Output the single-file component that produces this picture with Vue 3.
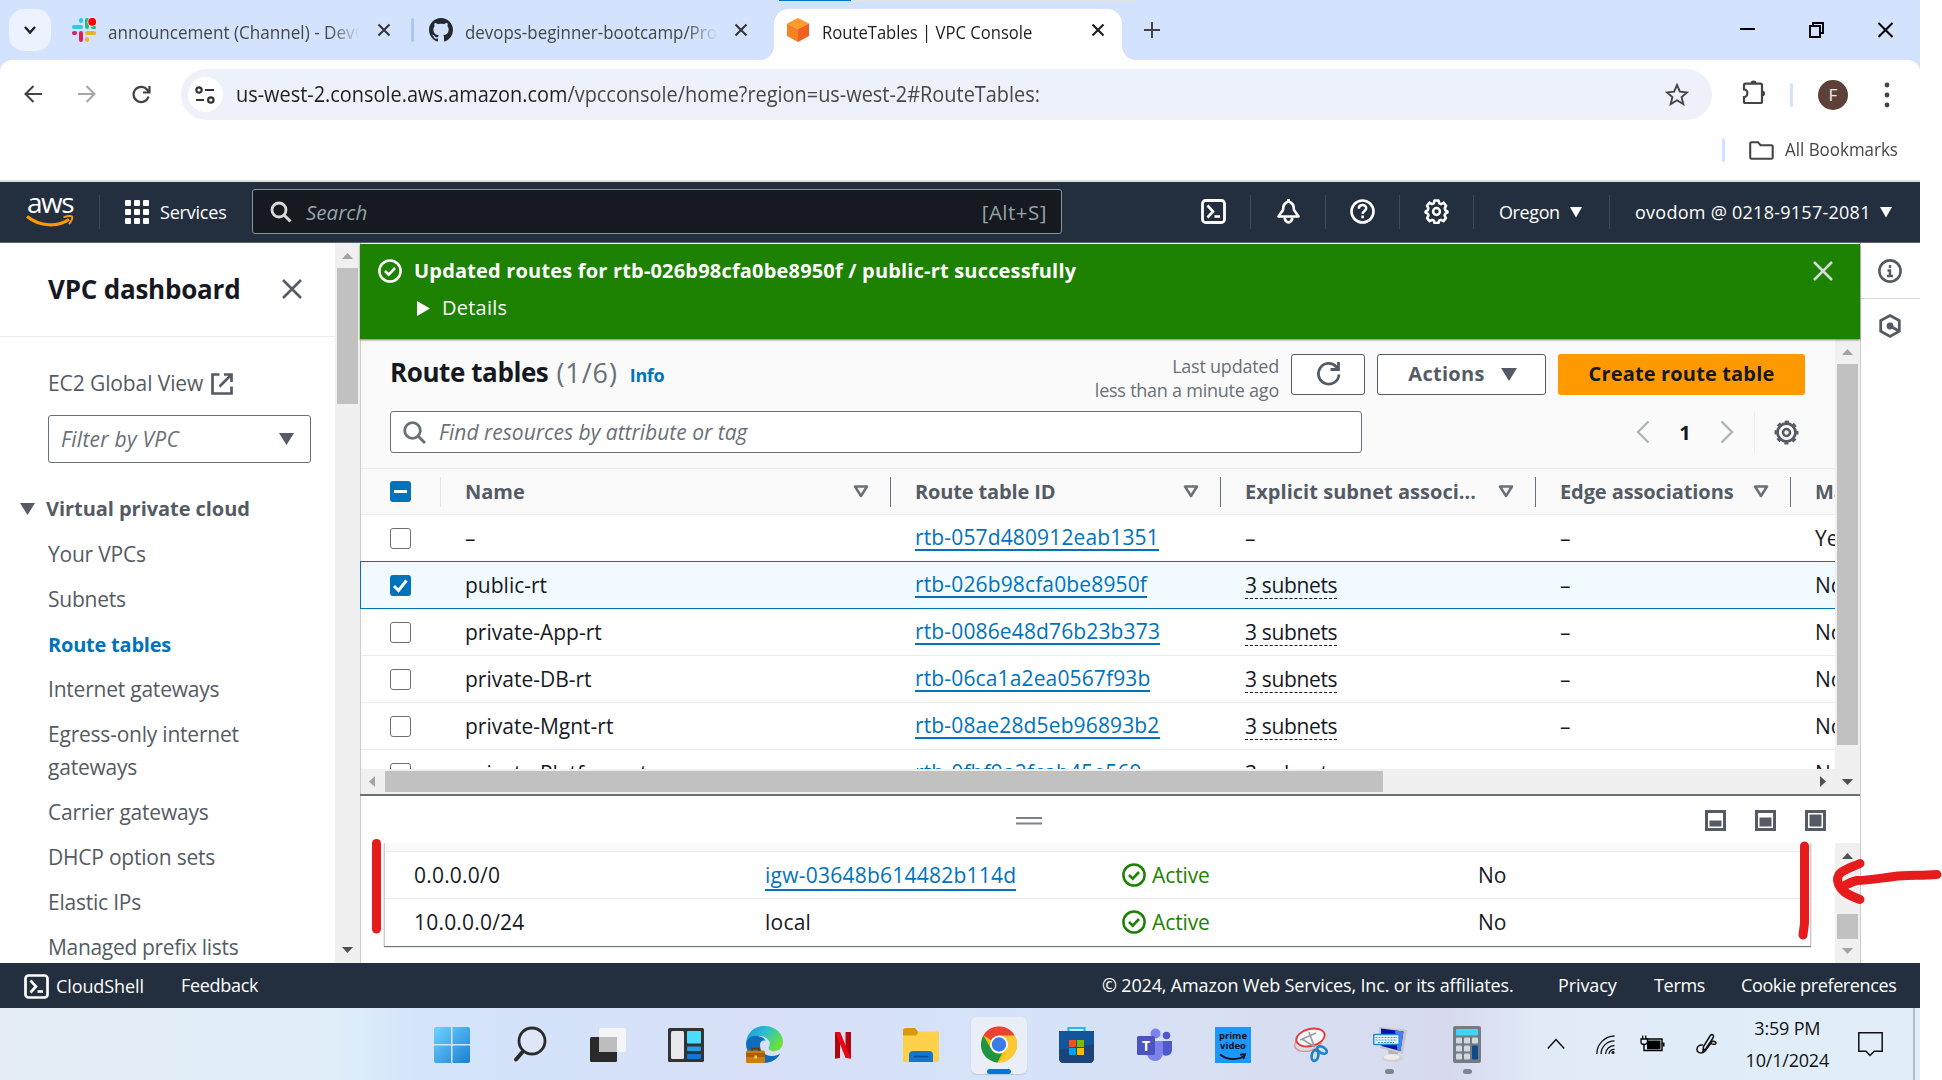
<script setup>
const navItems = [
  { label: 'Your VPCs' },
  { label: 'Subnets' },
  { label: 'Route tables', active: true },
  { label: 'Internet gateways' },
  { label: 'Egress-only internet gateways' },
  { label: 'Carrier gateways' },
  { label: 'DHCP option sets' },
  { label: 'Elastic IPs' },
  { label: 'Managed prefix lists' },
]

const routeTables = [
  { name: '–', id: 'rtb-057d480912eab1351', subnets: '–', edge: '–', main: 'Yes' },
  { name: 'public-rt', id: 'rtb-026b98cfa0be8950f', subnets: '3 subnets', edge: '–', main: 'No', selected: true },
  { name: 'private-App-rt', id: 'rtb-0086e48d76b23b373', subnets: '3 subnets', edge: '–', main: 'No' },
  { name: 'private-DB-rt', id: 'rtb-06ca1a2ea0567f93b', subnets: '3 subnets', edge: '–', main: 'No' },
  { name: 'private-Mgnt-rt', id: 'rtb-08ae28d5eb96893b2', subnets: '3 subnets', edge: '–', main: 'No' },
  { name: 'private-Platform-rt', id: 'rtb-0fbf9a2fcab45e569', subnets: '3 subnets', edge: '', main: 'No' },
]

const routes = [
  { destination: '0.0.0.0/0', target: 'igw-03648b614482b114d', link: true, status: 'Active', propagated: 'No' },
  { destination: '10.0.0.0/24', target: 'local', link: false, status: 'Active', propagated: 'No' },
]
</script>

<template>
  <div class="screen">
    <!-- Browser tab strip -->
    <div class="tabstrip">
      <div class="progress"><i></i></div>
      <div class="tabsearch">
        <svg width="14" height="12" viewBox="0 0 14 12"><path d="M2 3l5 5.5L12 3" fill="none" stroke="#1f1f1f" stroke-width="2.4" /></svg>
      </div>
      <div class="tab tab-slack">
        <svg class="fav" width="24" height="24" viewBox="0 0 24 24">
          <rect x="7" y="0" width="4" height="5" rx="2" fill="#36c5f0" /><rect x="0" y="7" width="11" height="4" rx="2" fill="#36c5f0" />
          <rect x="13" y="0" width="4" height="11" rx="2" fill="#2eb67d" /><rect x="19" y="8" width="5" height="3" rx="1.5" fill="#2eb67d" />
          <rect x="13" y="13" width="11" height="4" rx="2" fill="#ecb22e" /><rect x="13" y="19" width="4" height="5" rx="2" fill="#ecb22e" />
          <rect x="0" y="13" width="5" height="4" rx="2" fill="#e01e5a" /><rect x="7" y="13" width="4" height="11" rx="2" fill="#e01e5a" />
          <circle cx="20" cy="4" r="4.6" fill="#d3e3fd" /><circle cx="20.2" cy="3.8" r="3.9" fill="#f00" />
        </svg>
        <span class="tabtitle fade"><span>announcement (Channel) - DevO</span></span>
        <svg class="tabx" width="14" height="14" viewBox="0 0 14 14"><path d="M1.5 1.5l11 11M12.500 1.500l-11 11" stroke="#333" stroke-width="2" /></svg>
      </div>
      <i class="tabsep"></i>
      <div class="tab tab-github">
        <svg class="fav" width="24" height="24" viewBox="0 0 16 16"><path fill="#24292f" d="M8 0C3.58 0 0 3.58 0 8c0 3.54 2.29 6.53 5.47 7.59.4.07.55-.17.55-.38 0-.19-.01-.82-.01-1.49-2.01.37-2.53-.49-2.69-.94-.09-.23-.48-.94-.82-1.13-.28-.15-.68-.52-.01-.53.63-.01 1.08.58 1.23.82.72 1.21 1.87.87 2.33.66.07-.52.28-.87.51-1.07-1.78-.2-3.64-.89-3.64-3.95 0-.87.31-1.59.82-2.15-.08-.2-.36-1.02.08-2.12 0 0 .67-.21 2.2.82.64-.18 1.32-.27 2-.27s1.36.09 2 .27c1.53-1.04 2.2-.82 2.2-.82.44 1.1.16 1.92.08 2.12.51.56.82 1.27.82 2.15 0 3.07-1.87 3.75-3.65 3.95.29.25.54.73.54 1.48 0 1.07-.01 1.93-.01 2.2 0 .21.15.46.55.38A8.01 8.01 0 0 0 16 8c0-4.42-3.58-8-8-8z" /></svg>
        <span class="tabtitle fade"><span>devops-beginner-bootcamp/Pro</span></span>
        <svg class="tabx" width="14" height="14" viewBox="0 0 14 14"><path d="M1.5 1.5l11 11M12.500 1.500l-11 11" stroke="#333" stroke-width="2" /></svg>
      </div>
      <div class="tab tab-active">
        <svg class="fav" width="22" height="24" viewBox="0 0 22 24"><path d="M11 0l11 5.500L11 11 0 5.500z" fill="#ff9a2c" /><path d="M0 5.500L11 11v13L0 18z" fill="#f58220" /><path d="M22 5.500L11 11v13l11-6z" fill="#ee5f20" /></svg>
        <span class="tabtitle"><span>RouteTables | VPC Console</span></span>
        <svg class="tabx" width="14" height="14" viewBox="0 0 14 14"><path d="M1.500 1.500l11 11M12.500 1.500l-11 11" stroke="#222" stroke-width="2.200" /></svg>
      </div>
      <svg class="newtab" width="16" height="16" viewBox="0 0 16 16"><path d="M8 0v16M0 8h16" stroke="#444" stroke-width="2" /></svg>
      <div class="winbtns">
        <svg width="15" height="16" viewBox="0 0 15 16"><path d="M0 7h15" stroke="#000" stroke-width="2" /></svg>
        <svg width="15" height="16" viewBox="0 0 15 16"><path d="M1 4h10v11H1zM4 4V1h10v10h-3" fill="none" stroke="#000" stroke-width="1.900" /></svg>
        <svg width="15" height="16" viewBox="0 0 15 16"><path d="M.5 1l14 14M14.500 1l-14 14" stroke="#000" stroke-width="2" /></svg>
      </div>
    </div>

    <!-- Browser toolbar -->
    <div class="toolwrap">
      <div class="toolbar">
        <div class="nav-btns">
          <svg width="18" height="18" viewBox="0 0 18 18"><path d="M18 9H2M9.500 1L1.500 9l8 8" fill="none" stroke="#444" stroke-width="2.100" /></svg>
          <svg width="18" height="18" viewBox="0 0 18 18"><path d="M0 9h16M8.500 1l8 8-8 8" fill="none" stroke="#a6a6a6" stroke-width="2.100" /></svg>
          <svg width="19" height="19" viewBox="0 0 19 19"><path d="M16.500 11.500A7.600 7.600 0 1 1 15 4.500L17 7M17.500 1v6.500H11" fill="none" stroke="#444" stroke-width="2.200" /></svg>
        </div>
        <div class="urlbar">
          <span class="siteinfo">
            <svg width="20" height="18" viewBox="0 0 20 18"><g fill="none" stroke="#333" stroke-width="2.200"><circle cx="4" cy="4" r="2.700" /><path d="M10 4h9M1 14h8" /><circle cx="15.800" cy="14" r="2.700" /></g></svg>
          </span>
          <span class="url"><b>us-west-2.console.aws.amazon.com</b>/vpcconsole/home?region=us-west-2#RouteTables:</span>
          <svg width="24" height="23" viewBox="0 0 24 23"><path d="M12 2l2.900 6.700 7.100.7-5.400 4.700 1.700 7L12 17.300 5.700 21.100l1.700-7L2 9.400l7.100-.7z" fill="none" stroke="#444" stroke-width="1.900" /></svg>
        </div>
        <svg class="puzzle" width="24" height="25" viewBox="0 0 24 25"><path d="M2 5.200c0-1 .5-1.500 1.500-1.500H18.500c1 0 1.500.5 1.500 1.500V21.500c0 1-.5 1.500-1.500 1.500H3.500C2.500 23 2 22.500 2 21.500V17c4.500 0 4.500-7.500 0-7.500z" fill="none" stroke="#444" stroke-width="2.200" /><path d="M8.500 3.500a3 3 0 0 1 6 0zM20 10.500a2.800 2.800 0 0 1 0 6z" fill="#444" /></svg>
        <i class="vsep"></i>
        <span class="avatar">F</span>
        <svg class="dots" width="6" height="26" viewBox="0 0 6 26"><g fill="#444"><circle cx="3" cy="3" r="2.400" /><circle cx="3" cy="13" r="2.400" /><circle cx="3" cy="23" r="2.400" /></g></svg>
      </div>
      <div class="bookmarks">
        <i class="vsep"></i>
        <svg width="25" height="19" viewBox="0 0 25 19"><path d="M1.200 2.500c0-.8.500-1.300 1.300-1.300H9l2.500 3h10.800c.9 0 1.400.5 1.400 1.300V16.500c0 .8-.5 1.300-1.400 1.300H2.500c-.8 0-1.300-.5-1.300-1.300z" fill="none" stroke="#444" stroke-width="2.100" /></svg>
        <span>All Bookmarks</span>
      </div>
    </div>

    <!-- AWS header -->
    <header class="awsbar">
      <div class="awslogo">
        <span>aws</span>
        <svg width="48" height="14" viewBox="0 0 48 14"><path d="M1 1.500C14 12 32 12 43 4.500" fill="none" stroke="#ff9900" stroke-width="3.200" /><path d="M37.500 2.500C41 .8 45 .6 46 1.500c.8 1.500-.5 5-3 7.500" fill="none" stroke="#ff9900" stroke-width="1.900" /></svg>
      </div>
      <i class="hsep s1"></i>
      <svg class="grid" width="24" height="24" viewBox="0 0 24 24"><g fill="#fff"><template v-for="r in 3" :key="r"><rect v-for="c in 3" :key="c" :x="(c - 1) * 9" :y="(r - 1) * 9" width="6" height="6" rx="1" /></template></g></svg>
      <span class="services">Services</span>
      <div class="awssearch">
        <svg width="22" height="22" viewBox="0 0 22 22"><circle cx="9" cy="9" r="7" fill="none" stroke="#d5dbdb" stroke-width="2.800" /><path d="M14 14l6.500 6.500" stroke="#d5dbdb" stroke-width="3" /></svg>
        <em>Search</em><span>[Alt+S]</span>
      </div>
      <svg class="ic-shell" width="25" height="25" viewBox="0 0 25 25"><rect x="1.500" y="1.500" width="22" height="22" rx="3" fill="none" stroke="#fff" stroke-width="2.800" /><path d="M6.500 6.500l5.500 6-5.500 6" fill="none" stroke="#fff" stroke-width="2.600" /><path d="M13.500 17.500h5.500" stroke="#fff" stroke-width="2.600" /></svg>
      <i class="hsep s2"></i>
      <svg class="ic-bell" width="25" height="25" viewBox="0 0 25 25"><path d="M12.500 2.500c-4 1-5.500 4-5.500 8.500L2.500 17.500h20L18 11c0-4.500-1.500-7.500-5.500-8.500z" fill="none" stroke="#fff" stroke-width="2.600" stroke-linejoin="round" /><path d="M8.800 18.500c0 6.500 7.400 6.500 7.400 0M12.500 0v3" fill="none" stroke="#fff" stroke-width="2.800" /></svg>
      <i class="hsep s3"></i>
      <svg class="ic-help" width="25" height="25" viewBox="0 0 25 25"><circle cx="12.500" cy="12.500" r="11" fill="none" stroke="#fff" stroke-width="2.600" /><path d="M8.800 9.800c0-5 7.400-4.800 7.400-.6 0 2.800-3.600 2.800-3.600 5.800M12.600 16.500v2.800" fill="none" stroke="#fff" stroke-width="2.500" /></svg>
      <i class="hsep s3"></i>
      <svg class="ic-gear" width="25" height="25" viewBox="0 0 25 25"><path d="M10.500 1.500h4l.8 2.800 1.800.8 2.600-1.400 2.400 3-1.300 2.400.5 2 2.200 1.400-.1 1-2.300 1.400-.5 1.800 1.300 2.500-2.500 3-2.500-1.300-1.800.7-.7 2.500h-3.800l-.7-2.500-1.800-.7-2.500 1.300-2.500-3 1.300-2.500-.5-1.800-2.300-1.400v-1l2.200-1.400.5-2-1.300-2.400 2.400-3 2.600 1.400 1.800-.8z" fill="none" stroke="#fff" stroke-width="2.600" stroke-linejoin="round" /><circle cx="12.500" cy="12.500" r="3.400" fill="none" stroke="#fff" stroke-width="2.500" /></svg>
      <i class="hsep s3"></i>
      <span class="region">Oregon</span>
      <svg class="tri" width="12" height="12" viewBox="0 0 12 12"><path d="M0 1h12L6 11.500z" fill="#fff" /></svg>
      <i class="hsep s4"></i>
      <span class="account">ovodom @ 0218-9157-2081</span>
      <svg class="tri" width="12" height="12" viewBox="0 0 12 12"><path d="M0 1h12L6 11.500z" fill="#fff" /></svg>
    </header>

    <div class="body">
      <!-- Sidebar -->
      <aside class="side">
        <div class="sidehead">
          <h2>VPC dashboard</h2>
          <svg width="20" height="20" viewBox="0 0 20 20"><path d="M1 1l18 18M19 1L1 19" stroke="#545b64" stroke-width="2.600" /></svg>
        </div>
        <div class="ec2">
          <span>EC2 Global View</span>
          <svg width="22" height="22" viewBox="0 0 22 22"><g fill="none" stroke="#545b64" stroke-width="2.700"><path d="M8.500 1.500h-7v19h19v-7M13 1.500h7.500V9M20 2L8.500 13.500" /></g></svg>
        </div>
        <div class="filter"><em>Filter by VPC</em><svg width="15" height="12" viewBox="0 0 15 12"><path d="M0 0h15L7.500 12z" fill="#545b64" /></svg></div>
        <div class="section"><svg width="15" height="12" viewBox="0 0 15 12"><path d="M0 0h15L7.500 12z" fill="#545b64" /></svg><b>Virtual private cloud</b></div>
        <a v-for="n in navItems" :key="n.label" class="navitem" :class="{ active: n.active }">{{ n.label }}</a>
      </aside>
      <div class="vbar side-bar">
        <svg width="11" height="6" viewBox="0 0 11 6"><path d="M0 6h11L5.500 0z" fill="#a3a3a3" /></svg>
        <i class="thumb"></i>
        <svg class="end" width="11" height="6" viewBox="0 0 11 6"><path d="M0 0h11L5.500 6z" fill="#505050" /></svg>
      </div>

      <!-- Main -->
      <main class="main">
        <div class="flash">
          <svg width="24" height="24" viewBox="0 0 24 24"><circle cx="12" cy="12" r="10.600" fill="none" stroke="#fff" stroke-width="2.500" /><path d="M7 12l3.700 3.600L17 9" fill="none" stroke="#fff" stroke-width="2.600" /></svg>
          <div class="flashtext">
            <b>Updated routes for rtb-026b98cfa0be8950f / public-rt successfully</b>
            <div><svg width="13" height="15" viewBox="0 0 13 15"><path d="M0 0v15l13-7.500z" fill="#fff" /></svg><span>Details</span></div>
          </div>
          <svg class="fx" width="20" height="20" viewBox="0 0 20 20"><path d="M1 1l18 18M19 1L1 19" stroke="#d5dbdb" stroke-width="2.500" /></svg>
        </div>

        <div class="upper">
          <div class="tablearea">
            <div class="thead-panel">
              <div class="titlerow">
                <h1>Route tables</h1><span class="count">(1/6)</span><a class="info">Info</a>
                <div class="updated">Last updated<br />less than a minute ago</div>
                <div class="btn refresh"><svg width="25" height="25" viewBox="0 0 25 25"><path d="M23 13.500A10.300 10.300 0 1 1 20.500 6L23 9M22.500 1v7.500h-8" fill="none" stroke="#545b64" stroke-width="2.800" /></svg></div>
                <div class="btn actions">Actions<svg width="16" height="13" viewBox="0 0 16 13"><path d="M0 0h16L8 13z" fill="#545b64" /></svg></div>
                <div class="btn create">Create route table</div>
              </div>
              <div class="searchrow">
                <div class="find"><svg width="23" height="23" viewBox="0 0 23 23"><circle cx="9.500" cy="9.500" r="7.800" fill="none" stroke="#687078" stroke-width="2.800" /><path d="M15 15l7 7" stroke="#687078" stroke-width="3" /></svg><em>Find resources by attribute or tag</em></div>
                <svg class="pg1" width="14" height="24" viewBox="0 0 14 24"><path d="M12.500 1.500L2 12l10.500 10.500" fill="none" stroke="#aab7b8" stroke-width="2.400" /></svg>
                <b class="pgn">1</b>
                <svg class="pg2" width="14" height="24" viewBox="0 0 14 24"><path d="M1.500 1.500L12 12 1.500 22.500" fill="none" stroke="#aab7b8" stroke-width="2.400" /></svg>
                <i class="pgsep"></i>
                <svg class="pgear" width="25" height="25" viewBox="0 0 25 25"><circle cx="12.500" cy="12.500" r="9" fill="none" stroke="#545b64" stroke-width="2.800" /><circle cx="12.500" cy="12.500" r="10.900" fill="none" stroke="#545b64" stroke-width="2.200" stroke-dasharray="4.200 4.361" stroke-dashoffset="2.100" /><circle cx="12.500" cy="12.500" r="3.500" fill="none" stroke="#545b64" stroke-width="2.500" /></svg>
              </div>
              <div class="trow th">
                <div class="c0"><span class="cb on"><svg width="21" height="21" viewBox="0 0 21 21"><path d="M4 10.500h13" stroke="#fff" stroke-width="3" /></svg></span></div>
                <div class="c1"><b>Name</b><svg width="16" height="13" viewBox="0 0 16 13"><path d="M2 1.500h12L8 11z" fill="none" stroke="#687078" stroke-width="2.500" stroke-linejoin="round" /></svg></div>
                <div class="c2"><b>Route table ID</b><svg width="16" height="13" viewBox="0 0 16 13"><path d="M2 1.500h12L8 11z" fill="none" stroke="#687078" stroke-width="2.500" stroke-linejoin="round" /></svg></div>
                <div class="c3"><b>Explicit subnet associ...</b><svg width="16" height="13" viewBox="0 0 16 13"><path d="M2 1.500h12L8 11z" fill="none" stroke="#687078" stroke-width="2.500" stroke-linejoin="round" /></svg></div>
                <div class="c4"><b>Edge associations</b><svg width="16" height="13" viewBox="0 0 16 13"><path d="M2 1.500h12L8 11z" fill="none" stroke="#687078" stroke-width="2.500" stroke-linejoin="round" /></svg></div>
                <div class="c5"><b>Main</b></div>
              </div>
            </div>
            <div v-for="r in routeTables" :key="r.id" class="trow" :class="{ selected: r.selected }">
              <div class="c0"><span class="cb" :class="{ on: r.selected }"><svg v-if="r.selected" width="21" height="21" viewBox="0 0 21 21"><path d="M4 11l4.500 4.500L16.500 5.500" fill="none" stroke="#fff" stroke-width="3" /></svg></span></div>
              <div class="c1">{{ r.name }}</div>
              <div class="c2"><a class="link">{{ r.id }}</a></div>
              <div class="c3"><span :class="{ dashed: r.subnets !== '–' }">{{ r.subnets }}</span></div>
              <div class="c4">{{ r.edge }}</div>
              <div class="c5">{{ r.main }}</div>
            </div>
          </div>
          <div class="vbar main-bar">
            <svg width="11" height="6" viewBox="0 0 11 6"><path d="M0 6h11L5.500 0z" fill="#a3a3a3" /></svg>
            <i class="thumb"></i>
          </div>
        </div>
        <div class="hbar">
          <svg width="6" height="11" viewBox="0 0 6 11"><path d="M6 0v11L0 5.500z" fill="#a3a3a3" /></svg>
          <i class="thumb"></i>
          <svg class="r" width="6" height="11" viewBox="0 0 6 11"><path d="M0 0v11l6-5.500z" fill="#505050" /></svg>
          <svg class="d" width="11" height="6" viewBox="0 0 11 6"><path d="M0 0h11L5.500 6z" fill="#505050" /></svg>
        </div>

        <!-- Split panel -->
        <div class="split-head">
          <svg class="handle" width="26" height="8" viewBox="0 0 26 8"><path d="M0 1h26M0 6.500h26" stroke="#7d8289" stroke-width="1.800" /></svg>
          <svg width="21" height="21" viewBox="0 0 21 21"><rect x="1.500" y="1.500" width="18" height="18" fill="none" stroke="#545b64" stroke-width="3" /><rect x="4.500" y="10.500" width="12" height="6" fill="#545b64" /></svg>
          <svg width="21" height="21" viewBox="0 0 21 21"><rect x="1.500" y="1.500" width="18" height="18" fill="none" stroke="#545b64" stroke-width="3" /><rect x="4.500" y="7.500" width="12" height="9" fill="#545b64" /></svg>
          <svg width="21" height="21" viewBox="0 0 21 21"><rect x="1.500" y="1.500" width="18" height="18" fill="none" stroke="#545b64" stroke-width="3" /><rect x="4.500" y="4.500" width="12" height="12" rx="1" fill="#545b64" /></svg>
        </div>
        <div class="split-body">
          <div class="card">
            <div class="cardtop"></div>
            <div v-for="r in routes" :key="r.destination" class="rrow">
              <span class="d">{{ r.destination }}</span>
              <span class="t"><a :class="{ link: r.link }">{{ r.target }}</a></span>
              <span class="s"><svg width="24" height="24" viewBox="0 0 24 24"><circle cx="12" cy="12" r="10.600" fill="none" stroke="#1d8102" stroke-width="2.500" /><path d="M7 12l3.700 3.600L17 9" fill="none" stroke="#1d8102" stroke-width="2.600" /></svg>{{ r.status }}</span>
              <span>{{ r.propagated }}</span>
            </div>
          </div>
          <div class="vbar split-bar">
            <svg width="11" height="6" viewBox="0 0 11 6"><path d="M0 6h11L5.500 0z" fill="#505050" /></svg>
            <i class="thumb"></i>
            <svg class="end" width="11" height="6" viewBox="0 0 11 6"><path d="M0 0h11L5.500 6z" fill="#a3a3a3" /></svg>
          </div>
        </div>
      </main>

      <div class="rail">
        <div class="cell one"><svg width="24" height="24" viewBox="0 0 24 24"><circle cx="12" cy="12" r="10.600" fill="none" stroke="#545b64" stroke-width="2.600" /><path d="M12 6v3M9.500 11.500H12V17M9 17h6" fill="none" stroke="#545b64" stroke-width="2.400" /></svg></div>
        <div class="cell two"><svg width="24" height="26" viewBox="0 0 24 26"><path d="M12 2.500l9.300 5v10.800L12 23.500l-9.300-5.200V7.500z" fill="none" stroke="#545b64" stroke-width="2.800" /><circle cx="12" cy="13" r="3.400" fill="#545b64" /><path d="M12 13l8 4.500" stroke="#545b64" stroke-width="2.800" /></svg></div>
      </div>
    </div>

    <!-- Console footer -->
    <footer class="foot">
      <svg width="25" height="25" viewBox="0 0 25 25"><rect x="1.500" y="1.500" width="22" height="22" rx="3" fill="none" stroke="#fff" stroke-width="2.700" /><path d="M6.500 6.500l5.500 6-5.500 6" fill="none" stroke="#fff" stroke-width="2.600" /><path d="M13.500 17.500h5.500" stroke="#fff" stroke-width="2.600" /></svg>
      <span class="f1">CloudShell</span><span class="f2">Feedback</span>
      <span class="f3">© 2024, Amazon Web Services, Inc. or its affiliates.</span>
      <span class="f4">Privacy</span><span class="f5">Terms</span><span class="f6">Cookie preferences</span>
    </footer>

    <!-- Windows taskbar -->
    <div class="taskbar">
      <div class="apps">
        <div class="app">
          <svg width="36" height="36" viewBox="0 0 36 36"><defs><linearGradient id="win" x1="0" y1="0" x2="1" y2="1" gradientUnits="objectBoundingBox"><stop offset="0" stop-color="#6fd3ff" /><stop offset="1" stop-color="#1a7fd4" /></linearGradient></defs><path d="M2 0h15v17H0V2q0-2 2-2zM18.500 0H34q2 0 2 2v15H18.500zM0 18.500h17V36H2q-2 0-2-2zM18.500 18.500H36V34q0 2-2 2H18.500z" fill="url(#win)" /></svg>
        </div>
        <div class="app">
          <svg class="lens" width="34" height="40" viewBox="0 0 34 40"><circle cx="19" cy="17" r="13" fill="#dfe6f8" stroke="#2b2b2b" stroke-width="2.800" /><path d="M9.500 28L3 35.500" stroke="#2b2b2b" stroke-width="4" stroke-linecap="round" /></svg>
        </div>
        <div class="app">
          <svg width="36" height="36" viewBox="0 0 36 36"><rect x="0" y="10" width="27" height="25" rx="1.500" fill="#2a2a2a" /><rect x="9" y="1" width="27" height="24" rx="1.500" fill="#f6f6f6" fill-opacity=".95" /><path d="M9 10h18v15H9z" fill="#bdbdbd" /></svg>
        </div>
        <div class="app">
          <svg width="36" height="34" viewBox="0 0 36 34"><rect width="36" height="34" rx="1.500" fill="#333" /><rect x="3" y="3" width="13" height="28" rx="1.500" fill="#e6e8ec" /><rect x="19" y="3" width="14" height="12.500" rx="1" fill="#4cdcff" /><rect x="19" y="18.500" width="14" height="4.500" rx="1" fill="#22a0e8" /><rect x="19" y="26" width="14" height="5" rx="1" fill="#0e78d8" /></svg>
        </div>
        <div class="app">
          <svg width="37" height="37" viewBox="0 0 37 37"><defs><linearGradient id="edg" x1="0" y1="0" x2="1" y2=".55"><stop offset="0" stop-color="#1a8fe0" /><stop offset=".5" stop-color="#2cc0d0" /><stop offset="1" stop-color="#6be03a" /></linearGradient></defs><path d="M0 17C1 6 9 0 18.500 0 30 0 37 8 37 16c0 7-6 10-11 9-4-1-4-3-2.500-5.500C25 15 20 10 13 10 6 10 1 13 0 17z" fill="url(#edg)" /><path d="M0 17C1.500 11 7 9 12 10c4 .6 7 3 7.500 5-3-1.500-6 1-5.500 5 .5 6 5.500 10 12 10 4 0 6.500-1 8-2.500-2 5.500-9 9.500-15.500 9.500C8 37 0 28 0 17z" fill="#0f6cbd" /><rect y="24.500" width="19" height="12.500" rx="1.500" fill="#d07d08" /><path d="M0 27h19v4H0z" fill="#a95c00" /><path d="M6 25v-2.500h7V25" fill="none" stroke="#6d3b00" stroke-width="1.600" /><rect x="8.500" y="29.500" width="2.500" height="3" fill="#ffd54a" /></svg>
        </div>
        <div class="app">
          <svg width="16" height="28" viewBox="0 0 16 28"><path d="M0 1h5v26l-5 .8zM10.500 1H16v26.500l-5.500-.8z" fill="#b1060f" /><path d="M0 1h5.200L16 27.500l-5.500-.7z" fill="#e50914" /></svg>
        </div>
        <div class="app">
          <svg width="36" height="34" viewBox="0 0 36 34"><path d="M0 2.500Q0 0 2.500 0H12l3 3.500V8H0z" fill="#d9980a" /><path d="M0 7.500h13l3-4h18q2 0 2 2V32q0 2-2 2H2q-2 0-2-2z" fill="#ffd04a" /><path d="M6 34V27q0-4 4-4h16q4 0 4 4v7z" fill="#1276cf" /><path d="M10.500 28.500h15" stroke="#0a4d96" stroke-width="1.600" /></svg>
        </div>
        <div class="app chrome-tile">
          <svg width="36" height="37" viewBox="0 0 36 36"><circle cx="18" cy="18" r="18" fill="#fbbc04" /><path d="M18 18L2.400 9A18 18 0 0 1 33.600 9z" fill="#ea4335" /><path d="M18 9h15.600A18 18 0 0 1 18 36l7.800-13.500z" fill="#fcc934" /><path d="M2.400 9l7.800 13.500A9 9 0 0 0 18 27l3 0L16.500 36A18 18 0 0 1 2.400 9z" fill="#1e9447" /><circle cx="18" cy="18" r="9" fill="#fff" /><circle cx="18" cy="18" r="7.200" fill="#3a7bea" /></svg>
          <i class="pill"></i>
        </div>
        <div class="app">
          <svg width="35" height="37" viewBox="0 0 35 37"><path d="M9.500 7V2h16v5" fill="none" stroke="#22b8f0" stroke-width="2.200" /><path d="M0 5h35v27q0 5-5 5H5q-5 0-5-5z" fill="#12559a" /><path d="M0 24l35-6v14q0 5-5 5H5q-5 0-5-5z" fill="#1c4478" /><path d="M10 14h7v7h-7z" fill="#f25022" /><path d="M18 14h7v7h-7z" fill="#7fba00" /><path d="M10 22h7v7h-7z" fill="#00a4ef" /><path d="M18 22h7v7h-7z" fill="#ffb900" /></svg>
        </div>
        <div class="app">
          <svg width="36" height="34" viewBox="0 0 36 34"><circle cx="18.500" cy="5.500" r="5" fill="#7b83eb" /><circle cx="29.500" cy="7.500" r="3.800" fill="#5059c9" /><path d="M26 13h9v9a6 6 0 0 1-9 5z" fill="#5059c9" /><path d="M10 13h16v12a8 8 0 0 1-16 0z" fill="#7b83eb" /><rect y="8" width="18" height="19" rx="1.500" fill="#4b53bc" /><text x="9" y="22.500" text-anchor="middle" class="teams">T</text></svg>
        </div>
        <div class="app">
          <div class="prime"><span>prime</span><span>video</span><svg width="28" height="8" viewBox="0 0 28 8"><path d="M1 1.500c8 6 18 5.500 24 2M21 1.700l5-.4-1.500 4.500" fill="none" stroke="#06121c" stroke-width="1.800" /></svg></div>
        </div>
        <div class="app">
          <svg width="34" height="36" viewBox="0 0 34 36"><g fill="none"><ellipse cx="14" cy="16" rx="13.500" ry="8" transform="rotate(-14 14 16)" stroke="#e88" stroke-width="1.300" /><ellipse cx="16.500" cy="10.500" rx="14.500" ry="8.500" transform="rotate(-14 16.500 10.500)" fill="#f8f8fb" stroke="#e03c3c" stroke-width="1.900" /><path d="M6 13l16-7M15 5l5 14M8 12l13 8" stroke="#9a9ea6" stroke-width="1.700" /><ellipse cx="21" cy="28.500" rx="3.300" ry="5.500" transform="rotate(10 21 28.500)" stroke="#1c84c6" stroke-width="2.700" /><ellipse cx="28" cy="23" rx="5.200" ry="3" transform="rotate(30 28 23)" stroke="#1c84c6" stroke-width="2.700" /></g></svg>
        </div>
        <div class="app">
          <svg class="nudge" width="36" height="36" viewBox="0 0 36 36"><path d="M6 0l28 3-4 24-23-6z" fill="#c4c7cd" /><path d="M8 1.500l22.500 3-3 19.500-19-5z" fill="#0a12a8" /><path d="M22 3.400l8.500 1.100-3 19.500-3-.8z" fill="#4f7df5" /><rect x=".7" y="7.500" width="25.500" height="10" rx="1" fill="#e8f3ff" stroke="#1e88d8" stroke-width="1.500" /><path d="M2.500 10.500h21.500M2.500 13h21.500M5 15.500h16" stroke="#3a96dd" stroke-width="1.200" stroke-dasharray="2 1" /><path d="M15 23l10 2.500-1 5.500h-8z" fill="#b0b2b6" /><ellipse cx="19.500" cy="31" rx="10.500" ry="4.300" fill="#d2d2d2" /><ellipse cx="18.500" cy="30" rx="8" ry="2.800" fill="#ececec" /></svg>
          <i class="dot"></i>
        </div>
        <div class="app">
          <svg width="28" height="37" viewBox="0 0 28 37"><rect width="28" height="37" rx="2" fill="#737b84" /><rect x="3" y="3" width="22" height="6.500" rx="1" fill="#3fd5f5" /><g fill="#d3d7de"><rect x="3" y="11.500" width="6" height="6" rx="1.300" /><rect x="11" y="11.500" width="6" height="6" rx="1.300" /><rect x="19" y="11.500" width="6" height="6" rx="1.300" /><rect x="3" y="19.500" width="6" height="6" rx="1.300" /><rect x="11" y="19.500" width="6" height="6" rx="1.300" /><rect x="3" y="27.500" width="6" height="6" rx="1.300" /><rect x="11" y="27.500" width="6" height="6" rx="1.300" /></g><rect x="19" y="19.500" width="6" height="14" rx="1.300" fill="#104a8e" /></svg>
          <i class="dot"></i>
        </div>
      </div>
      <div class="tray">
        <svg class="t1" width="18" height="12" viewBox="0 0 18 12"><path d="M.8 10.500L9 1.500l8.200 9" fill="none" stroke="#111" stroke-width="1.500" /></svg>
        <svg class="t2" width="19" height="20" viewBox="0 0 19 20"><g fill="none" stroke="#111" stroke-width="1.300"><path d="M.8 19A18 18 0 0 1 18.500 1M5 19A13.500 13.500 0 0 1 18.500 5.800M9.500 19a9 9 0 0 1 9-8.500M13 19a5 5 0 0 1 5.500-4.500" /></g><circle cx="17" cy="17.500" r="1.500" fill="#111" /></svg>
        <svg class="t3" width="25" height="18" viewBox="0 0 25 18"><path d="M5 4h17v11.500H4V10" fill="none" stroke="#000" stroke-width="1.400" /><rect x="7" y="5.500" width="13.500" height="8.800" /><path d="M22.500 7.500h2v4h-2z" /><path d="M1 4h6.500v3.200Q7 9.500 4.200 9.500 1 9.500 1 7zM2.700 4V.5M5.800 4V.5" fill="#e2eefa" stroke="#000" stroke-width="1.300" /></svg>
        <svg class="t4" width="21" height="22" viewBox="0 0 21 22"><g fill="none" stroke="#111" stroke-width="1.500"><path d="M15.500 1.500c2 0 2.500 1.500 1.500 3.500l-7 10.500-3 2 .5-4L14 3q.7-1.200 1.500-1.500zM7 12c-4-.5-6.500 2-6 5 .5 3.500 6 4 8.500.5L16 8.500c2.500-1 5 1 3.500 2.300-1.500 1-3.500.2-5-.3" /></g></svg>
        <div class="clock">3:59 PM<br />10/1/2024</div>
        <svg class="t5" width="25" height="25" viewBox="0 0 25 25"><path d="M.8.800h23.400v18.500h-8L12 23.500l-4-4.200H.8z" fill="none" stroke="#111" stroke-width="1.500" /></svg>
      </div>
    </div>

    <!-- Hand-drawn markup over the console -->
    <svg class="ink" width="1942" height="1080" viewBox="0 0 1942 1080">
      <g fill="none" stroke="#e61c1c" stroke-width="9" stroke-linecap="round" stroke-linejoin="round">
        <path d="M376.500 843.500V929" />
        <path d="M1804.500 846v76c0 4-1 8-1.500 13" />
        <path d="M1937 874.500c-20 1-32 1-43 2-16 2-26 4-37 4-5 1-9 3-14 6" />
        <path d="M1860 863.500c-9 4-17 6-21 11-3 5-1 10 2 14 5 6 11 8 19 11" />
      </g>
    </svg>
  </div>
</template>

<style>
body { background: #fff; overflow: hidden; }
</style>

<style scoped>
* { box-sizing: border-box; }
.screen { position: relative; width: 1942px; height: 1080px; overflow: hidden; background: #fff; font-family: "Open Sans", "Noto Sans", sans-serif; font-size: 21px; color: #16191f; white-space: nowrap; }
svg { display: block; flex: none; }
h1, h2 { margin: 0; }

.tabstrip { position: relative; width: 1920px; height: 60px; background: #d3e3fd; display: flex; align-items: center; padding-left: 9px; }
.progress { position: absolute; left: 779px; top: 0; width: 362px; height: 1px; background: #e3e3e3; }
.progress i { display: block; width: 72px; height: 1px; background: #0078d4; }
.tabsearch { width: 42px; height: 42px; border-radius: 15px; background: #ecf2fe; display: flex; align-items: center; justify-content: center; }
.tab { display: flex; align-items: center; height: 60px; }
.tab-slack { width: 359px; padding-left: 21px; }
.tab-github { width: 360px; padding-left: 15px; }
.tab-active { position: relative; width: 348px; height: 51px; margin-top: 9px; padding: 0 17px 9px 13px; background: #fff; border-radius: 15px 15px 0 0; }
.tab-active::before, .tab-active::after { content: ""; position: absolute; bottom: 0; width: 15px; height: 15px; }
.tab-active::before { left: -15px; background: radial-gradient(circle at 0 0, transparent 15px, #fff 15.500px); }
.tab-active::after { right: -15px; background: radial-gradient(circle at 100% 0, transparent 15px, #fff 15.500px); }
.tabtitle { width: 252px; margin-left: 12px; overflow: hidden; font-size: 19px; line-height: 28px; padding-top: 3px; color: #444746; }
.tabtitle span { display: inline-block; transform: scaleX(.9); transform-origin: 0 50%; }
.tab-github .tabtitle span { transform: scaleX(.89); }
.tab-active .tabtitle { color: #1f1f1f; margin-left: 13px; }
.tab-active .tabtitle span { transform: scaleX(.875); }
.fade { -webkit-mask-image: linear-gradient(90deg, #000 88%, transparent 100%); mask-image: linear-gradient(90deg, #000 88%, transparent 100%); }
.tabx { margin-left: 17px; }
.tab-active .tabx { margin-left: auto; }
.tabsep { width: 3px; height: 24px; margin-left: 1px; border-radius: 2px; background: #a8c7fa; }
.newtab { margin-left: 22px; }
.winbtns { margin: 0 27px 0 auto; display: flex; gap: 54px; }

.toolwrap { width: 1920px; height: 122px; background: #d3e3fd; border-bottom: 2px solid #dedede; }
.toolbar { height: 72px; background: #fff; border-radius: 12px 12px 0 0; display: flex; align-items: center; padding: 0 30px 3px 24px; }
.nav-btns { display: flex; gap: 36px; width: 157px; }
.urlbar { width: 1532px; height: 51px; border-radius: 26px; background: #ecf1fa; display: flex; align-items: center; padding: 0 23px 0 7px; }
.siteinfo { width: 35px; height: 35px; border-radius: 50%; background: #fff; display: flex; align-items: center; justify-content: center; }
.url { display: inline-block; margin: -1px auto 0 13px; font-size: 21px; transform: scaleX(.948); transform-origin: 0 50%; color: #474747; }
.url b { font-weight: 400; color: #1f1f1f; }
.puzzle { margin-left: 30px; margin-top: -5px; }
.toolbar .vsep { margin-left: 24px; }
.vsep { width: 3px; height: 24px; border-radius: 2px; background: #d3e3fd; }
.avatar { width: 30px; height: 30px; margin-left: 25px; border-radius: 50%; background: #5d4037; color: #eee; font-size: 17px; line-height: 30px; text-align: center; }
.dots { margin-left: 36px; }
.bookmarks { height: 48px; background: #fff; display: flex; align-items: center; padding: 0 0 12px 1722px; font-size: 19px; color: #444746; }
.bookmarks svg { margin: 0 11px 0 24px; }
.bookmarks span { display: inline-block; width: 130px; margin-right: -20px; transform: scaleX(.892); transform-origin: 0 50%; margin-top: -2px; }

.awsbar { width: 1920px; height: 61px; background: #232f3e; border-bottom: 1px solid #5a6470; display: flex; align-items: center; padding-bottom: 1px; color: #fff; font-size: 18px; font-weight: 500; }
.awslogo { width: 48px; height: 32px; margin-left: 26px; }
.awslogo span { display: block; height: 19px; margin-left: 1px; font-size: 28px; font-weight: 500; line-height: 13px; letter-spacing: -1.500px; }
.hsep { width: 1px; height: 34px; background: #3f4a58; }
.s1 { margin-left: 25px; }
.grid { margin-left: 25px; }
.services { width: 92px; margin-left: 11px; letter-spacing: -.2px; }
.awssearch { width: 810px; height: 45px; border: 1px solid #879596; border-radius: 3px; background: #16191f; display: flex; align-items: center; padding: 0 14px 0 17px; font-size: 20.500px; font-weight: 400; color: #95a5a6; }
.awssearch em { margin: 0 auto 0 14px; }
.awssearch span { letter-spacing: .5px; }
.ic-shell { margin-left: 139px; }
.s2 { margin-left: 24px; }
.ic-bell { margin-left: 25px; }
.s3 { margin-left: 24px; }
.ic-help { margin-left: 24px; }
.ic-gear { margin-left: 24px; }
.region { width: 62px; margin-left: 25px; letter-spacing: -.4px; }
.tri { margin-left: 9px; }
.s4 { margin-left: 27px; }
.account { width: 236px; margin-left: 25px; letter-spacing: .26px; }

.body { display: flex; width: 1920px; height: 720px; }
.side { width: 335px; height: 720px; overflow: hidden; color: #545b64; }
.sidehead { display: flex; align-items: center; height: 94px; padding: 0 0 2px 48px; border-bottom: 1px solid #eaeded; }
.sidehead h2 { width: 234px; font-size: 26px; color: #16191f; letter-spacing: -.22px; }
.ec2 { display: flex; align-items: center; height: 30px; margin: 31px 0 0 48px; letter-spacing: -.1px; }
.ec2 svg { margin-left: 8px; margin-top: 1px; }
.filter { display: flex; align-items: center; justify-content: space-between; width: 263px; height: 48px; margin: 17px 0 0 48px; padding: 0 16px 0 12px; border: 1px solid #687078; border-radius: 3px; color: #687078; }
.filter em { letter-spacing: .25px; }
.section { display: flex; align-items: center; height: 45px; margin: 23px 0 1px 20px; font-size: 20px; }
.section b { margin-left: 11px; letter-spacing: -.05px; }
.navitem { display: block; width: 250px; margin-left: 48px; padding: 6px 30px 6px 0; line-height: 33px; white-space: normal; letter-spacing: -.22px; }
.navitem:last-child { height: 41px; letter-spacing: -.32px; }
.navitem.active { color: #0073bb; font-weight: 700; font-size: 20px; }

.vbar { width: 25px; background: #f0f0f0; display: flex; flex-direction: column; align-items: center; }
.thumb { background: #c1c1c1; }
.vbar .thumb { width: 21px; }
.vbar .end { margin-top: auto; }
.side-bar { height: 720px; padding: 10px 0 10px; }
.side-bar .thumb { height: 136px; margin-top: 9px; }

.main { width: 1501px; height: 720px; padding-top: 1px; border-right: 1px solid #c8cdcf; border-left: 1px solid #c8cdcf; }
.flash { position: relative; display: flex; width: 1500px; height: 95px; margin-left: -1px; padding: 15px 27px 0 18px; background: #1d8102; color: #fff; box-shadow: 0 1px 2px rgba(0, 0, 0, .5); }
.flashtext { margin-left: 12px; margin-right: auto; }
.flashtext b { display: block; font-size: 20px; line-height: 24px; letter-spacing: .18px; }
.flashtext div { display: flex; align-items: center; margin: 11px 0 0 3px; font-size: 20px; font-weight: 500; line-height: 28px; }
.flashtext span { margin-left: 12px; letter-spacing: .25px; }
.fx { margin-top: 2px; }
.upper { display: flex; height: 430px; }
.tablearea { width: 1475px; margin-left: -1px; padding-left: 1px; overflow: hidden; }
.thead-panel { background: #fafafa; }
.titlerow { display: flex; align-items: center; height: 68px; padding-left: 29px; padding-bottom: 1px; }
.titlerow h1 { font-size: 26px; letter-spacing: -.42px; margin-top: -1px; }
.count { margin-left: 8px; margin-top: -1px; font-size: 27px; letter-spacing: .95px; color: #687078; }
.info { margin: 5px auto 0 12px; font-size: 18px; font-weight: 700; color: #0073bb; letter-spacing: -.4px; }
.updated { margin: 10px 12px 0 0; text-align: right; font-size: 18px; line-height: 24px; color: #687078; letter-spacing: -.24px; }
.btn { display: flex; align-items: center; justify-content: center; height: 41px; border: 1px solid #545b64; border-radius: 3px; background: #fff; color: #545b64; font-weight: 700; font-size: 20px; letter-spacing: .3px; margin-top: 3px; padding-bottom: 1px; }
.refresh { width: 74px; margin-right: 12px; }
.actions { width: 169px; margin-right: 12px; padding-left: 2px; }
.actions svg { margin-left: 16px; margin-top: 2px; }
.create { width: 247px; margin-right: 30px; border: 0; background: #ff9900; color: #16191f; letter-spacing: .15px; }
.searchrow { display: flex; align-items: center; height: 50px; padding-left: 29px; }
.find { display: flex; align-items: center; width: 972px; height: 42px; border: 1px solid #687078; border-radius: 3px; background: #fff; padding-left: 12px; color: #687078; }
.find em { margin-left: 13px; }
.pg1 { margin-left: 274px; }
.pgn { width: 14px; margin-left: 28px; text-align: center; font-size: 20px; }
.pg2 { margin-left: 28px; }
.pgsep { width: 1px; height: 41px; margin-left: 20px; background: #eaeded; }
.pgear { margin-left: 19px; margin-top: 1px; }
.trow { position: relative; display: flex; align-items: center; height: 47px; width: 1600px; border-bottom: 1px solid #eaeded; color: #16191f; }
.trow > div { display: flex; align-items: center; height: 30px; }
.th { height: 47px; margin-top: 11px; border-top: 1px solid #eaeded; color: #545b64; font-size: 20px; }
.thead-panel { height: 176px; }
.c0 { width: 80px; padding-left: 29px; }
.c1 { width: 450px; padding-left: 24px; }
.c2 { width: 330px; padding-left: 24px; }
.c3 { width: 315px; padding-left: 24px; }
.c4 { width: 255px; padding-left: 24px; }
.c5 { padding-left: 24px; }
.th > div { border-right: 1px solid #687078; padding-right: 21px; justify-content: space-between; }
.th > .c0 { border-color: #e3e6e6; }
.th > .c5 { border: 0; }
.th .c2 b { letter-spacing: -.15px; }
.th .c4 b { letter-spacing: -.1px; }
.th .c3 b { letter-spacing: .03px; }
.trow.selected { background: #f1faff; box-shadow: 0 -1px 0 #0073bb, -1px 0 0 #0073bb, -1px -1px 0 #0073bb; border-bottom-color: #0073bb; }
.selected { z-index: 1; }
.cb { width: 21px; height: 21px; border: 1.500px solid #687078; border-radius: 3px; background: #fff; display: block; }
.cb.on { border: 0; background: #0073bb; }
.link { color: #0073bb; border-bottom: 2px solid #0073bb; line-height: 23px; }
.c2 .link { letter-spacing: .14px; margin-top: 1px; }
.dashed { border-bottom: 1px dashed #16191f; line-height: 25px; margin-top: 2px; letter-spacing: -.35px; }
.main-bar { height: 430px; padding-top: 10px; }
.main-bar .thumb { height: 381px; margin-top: 9px; }
.hbar { display: flex; align-items: center; height: 25px; padding-left: 8px; background: #f0f0f0; }
.hbar .thumb { width: 998px; height: 21px; margin-left: 10px; }
.hbar .r { margin-left: 437px; }
.hbar .d { margin-left: 16px; }

.split-head { display: flex; align-items: center; gap: 29px; height: 49px; border-top: 2px solid #687078; padding: 2px 0 0 656px; margin-left: -1px; }
.split-head .handle { margin-right: 634px; }
.split-body { display: flex; height: 120px; padding-left: 23px; overflow: hidden; }
.card { width: 1427px; height: 103px; margin-right: 24px; border: solid #c8cdcf; border-width: 0 1px 0 1px; box-shadow: 0 1px 1px #6d777c; }
.cardtop { height: 9px; background: #fafafa; border-bottom: 1px solid #eaeded; }
.rrow { display: flex; align-items: center; height: 47px; padding-left: 29px; padding-bottom: 1px; border-bottom: 1px solid #eaeded; }
.rrow:last-child { border-bottom: 0; }
.rrow .d { width: 351px; letter-spacing: .2px; }
.rrow .t { width: 357px; letter-spacing: .24px; }
.rrow .s { display: flex; align-items: center; gap: 6px; width: 356px; color: #1d8102; letter-spacing: -.1px; }
.split-bar { padding: 10px 0 9px; }
.split-bar .thumb { height: 25px; margin-top: 55px; }

.rail { width: 59px; }
.cell { display: flex; justify-content: center; width: 59px; padding-right: 1px; }
.one { height: 56px; padding-top: 16px; border-bottom: 1px solid #d5dbdb; }
.two { padding-top: 14px; }

.foot { display: flex; align-items: center; width: 1920px; height: 45px; padding-left: 24px; background: #232f3e; color: #fff; font-size: 18px; font-weight: 500; padding-bottom: 2px; }
.foot svg { margin-top: 4px; }
.f1 { width: 125px; margin-left: 7px; letter-spacing: -.1px; margin-top: 2px; }
.f2 { width: 921px; letter-spacing: -.3px; }
.f3 { width: 456px; letter-spacing: -.16px; }
.f4 { width: 96px; letter-spacing: -.1px; }
.f5 { width: 87px; letter-spacing: -.3px; }
.f6 { letter-spacing: -.38px; }

.taskbar { display: flex; width: 1920px; height: 72px; background: linear-gradient(90deg, #e4edf6 0, #e0eef9 330px, #d3e4fb 430px, #d7e0f6 760px, #d5e3f8 1000px, #d8dff2 1240px, #d7daee 1450px, #e0ebf7 1540px, #e1eefa 1900px); }
.apps { display: flex; align-items: center; margin-left: 413px; }
.app { position: relative; display: flex; align-items: center; justify-content: center; width: 78.100px; height: 72px; }
.app > svg, .app > div { margin-top: 1px; }
.app > .nudge { margin-left: 3px; }
.app > .lens { margin-top: -1px; }
.chrome-tile::before { content: ""; position: absolute; inset: 9px 11px 6px; border-radius: 6px; background: #eaeef9; box-shadow: 0 1px 1px rgba(0, 0, 0, .12); }
.chrome-tile svg { position: relative; }
.pill { position: absolute; bottom: 6px; left: 27px; width: 24px; height: 5px; border-radius: 3px; background: #0078d4; }
.dot { position: absolute; bottom: 6px; left: 35px; width: 9px; height: 5px; border-radius: 3px; background: #7e8590; }
.teams { font: 700 14px "Open Sans", sans-serif; fill: #fff; }
.prime { display: flex; flex-direction: column; align-items: center; width: 36px; height: 36px; background: #1a98ff; color: #06121c; font-size: 9.500px; font-weight: 700; padding-top: 2px; }
.prime span { line-height: 14px; margin-bottom: -4px; }
.prime svg { margin-top: 4px; }
.tray { display: flex; align-items: center; height: 72px; margin-left: 41px; }
.t2 { margin-left: 31px; margin-top: 2px; }
.t3 { margin-left: 25px; }
.t4 { margin-left: 31px; }
.clock { width: 90px; margin: 0 0 0 25px; text-align: center; font-size: 18px; line-height: 32px; letter-spacing: -.2px; color: #111; }
.t5 { margin-left: 26px; margin-top: 1px; }
.tray::after { content: ""; width: 2px; height: 72px; margin-left: 30px; background: #b3bdc9; }

.ink { position: absolute; inset: 0; pointer-events: none; }
</style>
